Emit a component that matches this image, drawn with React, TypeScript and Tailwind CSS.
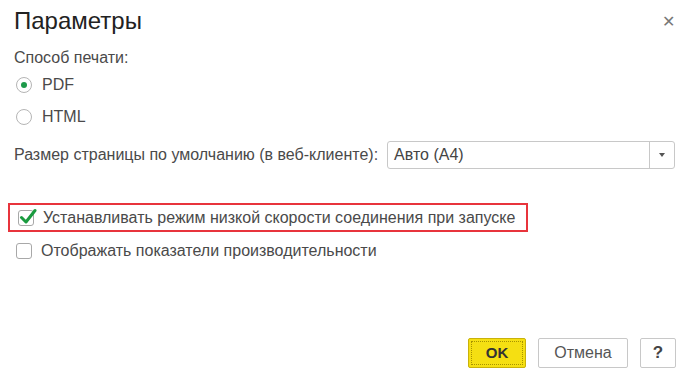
import React from 'react';

const Radio = ({ checked, label }: { checked?: boolean; label: string }) => (
  <label className="flex items-center gap-[10px] h-[32px]">
    <span className="w-[16px] h-[16px] rounded-full border border-[#b5b5b5] flex items-center justify-center bg-white">
      {checked && <span className="w-[6px] h-[6px] rounded-full bg-[#1d9a4a]" />}
    </span>
    <span>{label}</span>
  </label>
);

const Check = ({ checked, label }: { checked?: boolean; label: string }) => (
  <label className="flex items-center gap-[9px]">
    <span className="relative w-[16px] h-[16px] rounded-[3px] border border-[#a8a8a8] bg-white">
      {checked && (
        <svg className="absolute left-[0px] top-[-3px]" width="18" height="17" viewBox="0 0 18 17">
          <path d="M2.5 9.5 L7 14 L16 2.5" fill="none" stroke="#1a9b3f" strokeWidth="3" strokeLinecap="round" strokeLinejoin="round" />
        </svg>
      )}
    </span>
    <span>{label}</span>
  </label>
);

export default function App() {
  return (
    <div className="w-[693px] h-[371px] bg-white text-[#4a4a4a] text-[16px] relative" style={{ fontFamily: '"Liberation Sans", Arial, sans-serif' }}>
      <div className="flex items-start justify-between pl-[14px] pr-[18px] pt-[6px]">
        <h1 className="text-[24px] text-[#222] leading-[30px]">Параметры</h1>
        <button className="text-[#777] text-[16px] leading-none mt-[8px]">✕</button>
      </div>

      <div className="pl-[14px] pr-[18px] mt-[13px]">
        <div className="leading-[18px]">Способ печати:</div>
        <div className="pl-[2px] mt-[2px]">
          <Radio checked label="PDF" />
          <Radio label="HTML" />
        </div>

        <div className="flex items-center gap-[9px] mt-[8px]">
          <span>Размер страницы по умолчанию (в веб-клиенте):</span>
          <div className="flex-1 h-[28px] border border-[#c8c8c8] rounded-[3px] flex items-stretch">
            <span className="flex-1 flex items-center pl-[6px] text-[#444]">Авто (А4)</span>
            <span className="w-[25px] border-l border-[#c8c8c8] flex items-center justify-center">
              <span className="w-0 h-0 border-l-[3px] border-r-[3px] border-t-[4px] border-l-transparent border-r-transparent border-t-[#555]" />
            </span>
          </div>
        </div>

        <div className="mt-[34px] -ml-[6px] w-[520px] h-[29px] border-[2px] border-[#e8343c] flex items-center pl-[8px]">
          <Check checked label="Устанавливать режим низкой скорости соединения при запуске" />
        </div>
        <div className="mt-[7px] pl-[2px]">
          <Check label="Отображать показатели производительности" />
        </div>
      </div>

      <div className="absolute bottom-[3px] right-[17px] flex gap-[12px]">
        <button className="w-[58px] h-[30px] bg-[#f5df12] border border-[#c9b20a] rounded-[2px] p-[2px] text-[15px] font-bold text-[#333]">
          <span className="flex w-full h-full items-center justify-center border border-dotted border-[#a89300]">OK</span>
        </button>
        <button className="w-[90px] h-[30px] bg-white border border-[#c8c8c8] rounded-[2px] text-[#555]">Отмена</button>
        <button className="w-[36px] h-[30px] bg-white border border-[#c8c8c8] rounded-[2px] font-bold text-[17px] text-[#444]">?</button>
      </div>
    </div>
  );
}
